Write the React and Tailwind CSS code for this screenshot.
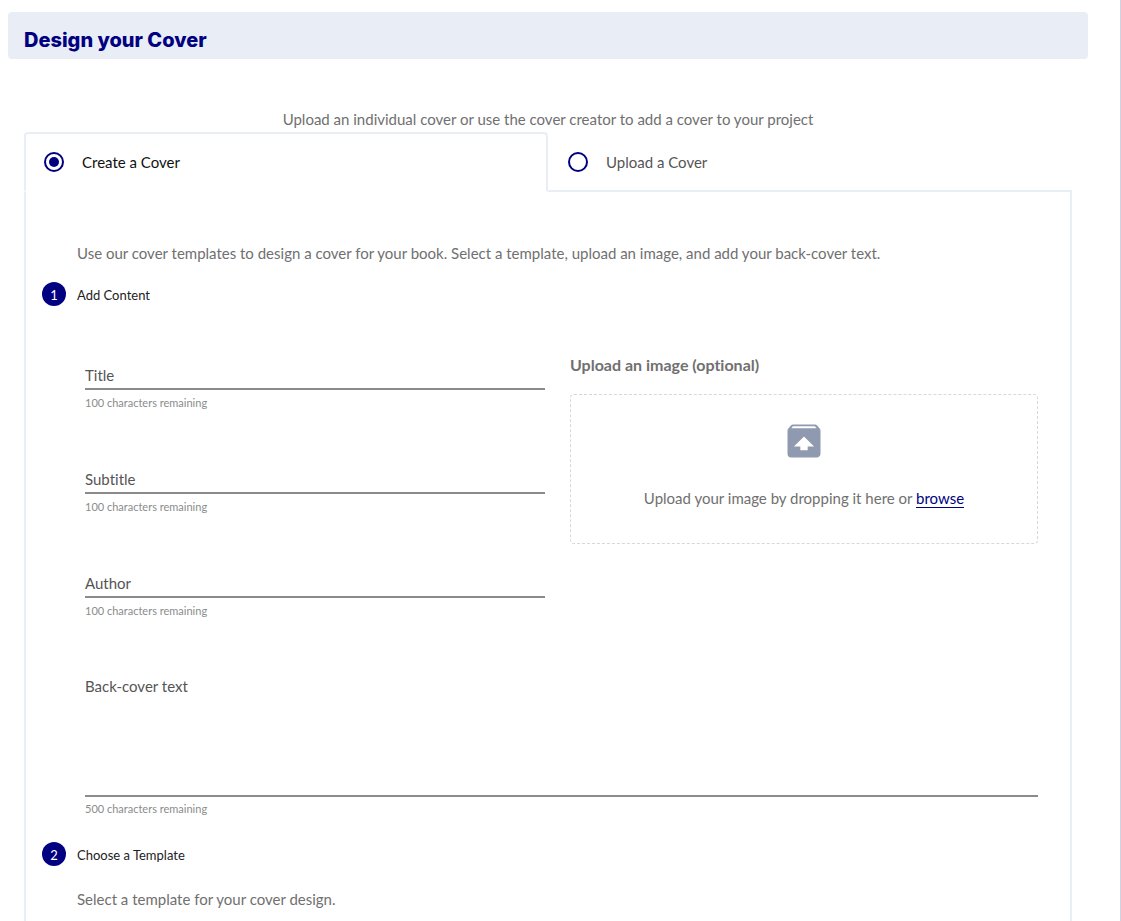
import React, { useState } from "react";
import { MdUnarchive } from "react-icons/md";

const TextField = ({ id, label, value, max, onChange }) => (
  <div>
    <div className="relative">
      <input
        id={id}
        type="text"
        maxLength={max}
        value={value}
        onChange={(e) => onChange(e.target.value)}
        className="peer block w-full h-[27px] border-b-2 border-[#8a8c8c] bg-transparent outline-none focus:border-[#000080]"
      />
      <label
        htmlFor={id}
        className={
          value
            ? "absolute left-0 -top-5 text-xs"
            : "absolute left-0 top-0 leading-6 peer-focus:-top-5 peer-focus:text-xs"
        }
      >
        {label}
      </label>
    </div>
    <p className="mt-[5px] text-[11px] leading-4 text-[#8a8c8c]">
      {max - value.length} characters remaining
    </p>
  </div>
);

const CoverTab = ({ id, label, checked, onSelect }) => (
  <div
    className={
      checked
        ? "flex-1 h-[60px] px-[18px] flex items-center gap-[18px] border-2 border-[#e8edf6] border-b-white rounded-t text-[#111111]"
        : "flex-1 h-[60px] px-5 pt-0.5 flex items-center gap-[18px] border-b-2 border-[#e8edf6] text-[#555555]"
    }
  >
    <input
      id={id}
      type="radio"
      name="cover-mode"
      checked={checked}
      onChange={onSelect}
      className="appearance-none w-5 h-5 shrink-0 rounded-full border-2 border-[#000080] bg-white bg-clip-content p-[3px] checked:bg-[#000080] cursor-pointer"
    />
    <label htmlFor={id} className="cursor-pointer">
      {label}
    </label>
  </div>
);

const StepHeading = ({ number, title }) => (
  <div className="flex items-center gap-[11px] text-[13px]">
    <span className="w-6 h-6 pt-0.5 rounded-full bg-[#000080] text-white flex items-center justify-center">
      {number}
    </span>
    <h2 className="pt-0.5 leading-[22px] text-[#222222]">{title}</h2>
  </div>
);

const App = () => {
  const [mode, setMode] = useState("create");
  const [title, setTitle] = useState("");
  const [subtitle, setSubtitle] = useState("");
  const [author, setAuthor] = useState("");
  const [backText, setBackText] = useState("");

  return (
    <div className="min-h-screen pt-3 pl-2 pr-8 border-r border-[#d0d3e2] bg-white font-['Lato',sans-serif] [font-variant-ligatures:none] text-[15px] leading-6 text-[#555555]">
      <header className="h-[47px] px-4 pt-2 flex items-center rounded bg-[#e8edf6]">
        <h1 className="font-['Inter',sans-serif] text-xl font-extrabold text-[#000080]">
          Design your Cover
        </h1>
      </header>

      <main className="mx-4 mt-12">
        <p className="text-center text-[#707070]">
          Upload an individual cover or use the cover creator to add a cover to
          your project
        </p>

        {/* Create / Upload tabs */}
        <div className="mt-px flex">
          <CoverTab
            id="create-cover"
            label="Create a Cover"
            checked={mode === "create"}
            onSelect={() => setMode("create")}
          />
          <CoverTab
            id="upload-cover"
            label="Upload a Cover"
            checked={mode === "upload"}
            onSelect={() => setMode("upload")}
          />
        </div>

        <div className="border-x-2 border-[#e8edf6] px-4 pt-[49px] pb-12">
          <p className="pl-[35px] text-[#707070]">
            Use our cover templates to design a cover for your book. Select a
            template, upload an image, and add your back-cover text.
          </p>

          {/* Step 1 */}
          <div className="mt-[17px]">
            <StepHeading number={1} title="Add Content" />
          </div>
          <div className="mt-12 pl-[43px] pr-4">
            <div className="grid grid-cols-[460fr_468fr] gap-[25px]">
              <div className="pt-[9px] flex flex-col gap-14">
                <TextField
                  id="title"
                  label="Title"
                  value={title}
                  max={100}
                  onChange={setTitle}
                />
                <TextField
                  id="subtitle"
                  label="Subtitle"
                  value={subtitle}
                  max={100}
                  onChange={setSubtitle}
                />
                <TextField
                  id="author"
                  label="Author"
                  value={author}
                  max={100}
                  onChange={setAuthor}
                />
              </div>

              <div>
                <h3 className="text-base leading-[22px] font-bold text-[#707070]">
                  Upload an image (optional)
                </h3>
                <div className="mt-[18px] h-[150px] flex flex-col items-center pt-6 rounded border border-dashed border-[#d8d8d8] text-[#707070]">
                  <MdUnarchive className="w-11 h-11 text-[#8f99af]" />
                  <p className="mt-[23px]">
                    Upload your image by dropping it here or{" "}
                    <a href="#browse" className="border-b border-[#000080] text-[#000080]">
                      browse
                    </a>
                  </p>
                </div>
              </div>
            </div>

            <div className="relative mt-[55px]">
              <textarea
                id="back-cover"
                maxLength={500}
                value={backText}
                onChange={(e) => setBackText(e.target.value)}
                className="peer block w-full h-[123px] resize-none border-b-2 border-[#8a8c8c] bg-transparent outline-none focus:border-[#000080]"
              />
              <label
                htmlFor="back-cover"
                className={
                  backText
                    ? "absolute left-0 -top-5 text-xs"
                    : "absolute left-0 top-0 leading-6 peer-focus:-top-5 peer-focus:text-xs"
                }
              >
                Back-cover text
              </label>
            </div>
            <p className="mt-1 text-[11px] leading-4 text-[#8a8c8c]">
              {500 - backText.length} characters remaining
            </p>
          </div>

          {/* Step 2 */}
          <div className="mt-[25px]">
            <StepHeading number={2} title="Choose a Template" />
          </div>
          <p className="mt-[21px] pl-[35px] text-[#707070]">
            Select a template for your cover design.
          </p>
        </div>
      </main>
    </div>
  );
};

export default App;
